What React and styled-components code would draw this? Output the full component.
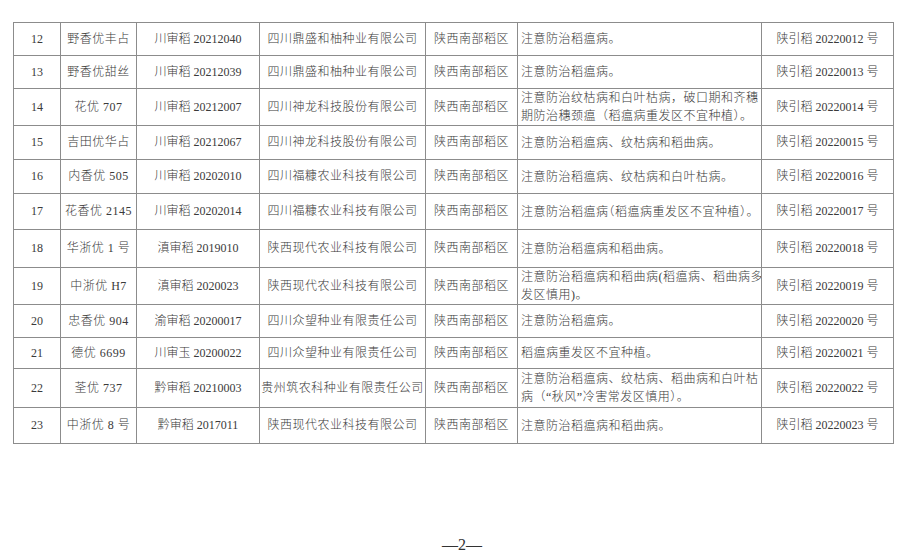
import styled, { createGlobalStyle } from "styled-components";

const Global = createGlobalStyle`
    html, body {
        margin: 0;
        padding: 0;
        background: #fff;
    }
    body {
        font-family: "Liberation Serif", "Noto Sans CJK SC", serif;
        color: #3a3a3a;
    }
`

const rows = [
    { no: 12, name: "野香优丰占", code: "川审稻 20212040", corp: "四川鼎盛和柚种业有限公司", note: ["注意防治稻瘟病。"], ref: "20220012", h: 33 },
    { no: 13, name: "野香优甜丝", code: "川审稻 20212039", corp: "四川鼎盛和柚种业有限公司", note: ["注意防治稻瘟病。"], ref: "20220013", h: 33 },
    { no: 14, name: "花优 707", code: "川审稻 20212007", corp: "四川神龙科技股份有限公司", note: ["注意防治纹枯病和白叶枯病，破口期和齐穗", "期防治穗颈瘟（稻瘟病重发区不宜种植）。"], ref: "20220014", h: 37 },
    { no: 15, name: "吉田优华占", code: "川审稻 20212067", corp: "四川神龙科技股份有限公司", note: ["注意防治稻瘟病、纹枯病和稻曲病。"], ref: "20220015", h: 34 },
    { no: 16, name: "内香优 505", code: "川审稻 20202010", corp: "四川福糠农业科技有限公司", note: ["注意防治稻瘟病、纹枯病和白叶枯病。"], ref: "20220016", h: 34 },
    { no: 17, name: "花香优 2145", code: "川审稻 20202014", corp: "四川福糠农业科技有限公司", note: ["注意防治稻瘟病（稻瘟病重发区不宜种植）。"], ref: "20220017", h: 36, tight: true },
    { no: 18, name: "华浙优 1 号", code: "滇审稻 2019010", corp: "陕西现代农业科技有限公司", note: ["注意防治稻瘟病和稻曲病。"], ref: "20220018", h: 38 },
    { no: 19, name: "中浙优 H7", code: "滇审稻 2020023", corp: "陕西现代农业科技有限公司", note: ["注意防治稻瘟病和稻曲病(稻瘟病、稻曲病多", "发区慎用)。"], ref: "20220019", h: 37 },
    { no: 20, name: "忠香优 904", code: "渝审稻 20200017", corp: "四川众望种业有限责任公司", note: ["注意防治稻瘟病。"], ref: "20220020", h: 33 },
    { no: 21, name: "德优 6699", code: "川审玉 20200022", corp: "四川众望种业有限责任公司", note: ["稻瘟病重发区不宜种植。"], ref: "20220021", h: 31 },
    { no: 22, name: "荃优 737", code: "黔审稻 20210003", corp: "贵州筑农科种业有限责任公司", note: ["注意防治稻瘟病、纹枯病、稻曲病和白叶枯", "病（“秋风”冷害常发区慎用）。"], ref: "20220022", h: 39 },
    { no: 23, name: "中浙优 8 号", code: "黔审稻 2017011", corp: "陕西现代农业科技有限公司", note: ["注意防治稻瘟病和稻曲病。"], ref: "20220023", h: 36 },
]

const widths = [47, 76, 123, 166, 92, 244, 132]

const Page = styled.div`
    width: 912px;
    height: 560px;
    box-sizing: border-box;
    padding: 22px 0 0 13px;
    display: flex;
    flex-direction: column;
`
const Table = styled.table`
    width: 880px;
    table-layout: fixed;
    border-collapse: collapse;
    font-size: 12px;
    font-weight: 300;
`
const Row = styled.tr`
    height: ${p => p.$h}px;
`
const Cell = styled.td`
    border: 1px solid #8c8c8c;
    padding: 0;
    text-align: center;
    vertical-align: middle;
    white-space: nowrap;
    overflow: hidden;
    line-height: 17px;
    letter-spacing: ${p => p.$spread ? "0.5px" : "0"};
`
const NoteCell = styled(Cell)`
    text-align: left;
    padding-left: 3px;
    letter-spacing: 0.5px;
    font-feature-settings: ${p => p.$tight ? '"halt"' : "normal"};
`
const NoteLine = styled.div`
    line-height: 18px;
`
const Folio = styled.div`
    margin-top: auto;
    margin-bottom: 6px;
    padding-left: 9px;
    width: 880px;
    text-align: center;
    font-size: 16px;
    color: #333;
`

const App = () => {
    return (
        <Page>
            <Global />
            <Table>
                <colgroup>
                    {widths.map((w, i) => <col key={i} width={w} />)}
                </colgroup>
                <tbody>
                    {rows.map(r => (
                        <Row key={r.no} $h={r.h}>
                            <Cell>{r.no}</Cell>
                            <Cell $spread>{r.name}</Cell>
                            <Cell>{r.code}</Cell>
                            <Cell $spread>{r.corp}</Cell>
                            <Cell $spread>陕西南部稻区</Cell>
                            <NoteCell $tight={r.tight}>
                                {r.note.map((line, i) => <NoteLine key={i}>{line}</NoteLine>)}
                            </NoteCell>
                            <Cell>陕引稻 {r.ref} 号</Cell>
                        </Row>
                    ))}
                </tbody>
            </Table>
            <Folio>—2—</Folio>
        </Page>
    );
}

export default App;
